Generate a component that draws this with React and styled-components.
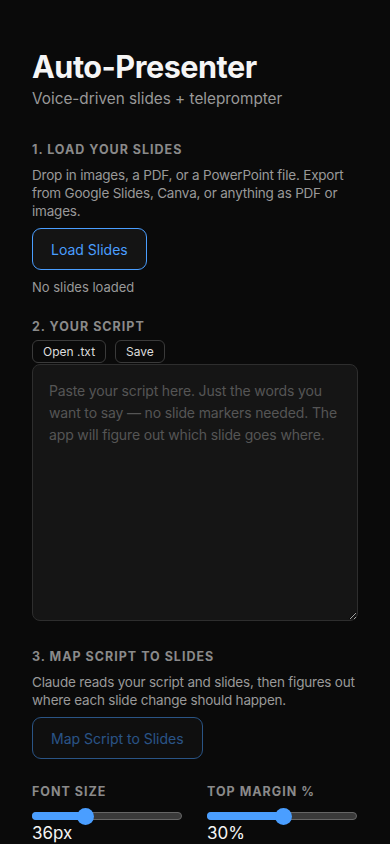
import React, { useState } from "react";
import styled, { createGlobalStyle } from "styled-components";

const GlobalStyle = createGlobalStyle`
  * { box-sizing: border-box; }
  body {
    margin: 0;
    background: #0a0a0a;
    color: #eee;
    font-family: Inter, "Helvetica Neue", Arial, sans-serif;
  }
`;

const Page = styled.main`
  padding: 49px 32px 40px;
  max-width: 390px;
`;

const Title = styled.h1`
  margin: 0;
  font-size: 30.6px;
  font-weight: 700;
  letter-spacing: -0.5px;
  color: #f5f5f5;
  line-height: 36px;
`;

const Subtitle = styled.p`
  margin: 3px 0 0;
  font-size: 15.3px;
  color: #999;
  line-height: 22px;
`;

const Section = styled.section`
  margin-top: ${(p) => p.$top || 28}px;
`;

const Heading = styled.h2`
  margin: 0 0 8px;
  font-size: 12.5px;
  font-weight: 700;
  letter-spacing: 1px;
  text-transform: uppercase;
  color: #8a8a8a;
  line-height: 16px;
`;

const Hint = styled.p`
  margin: 0;
  font-size: 13.5px;
  letter-spacing: -0.2px;
  line-height: 18px;
  color: #999;
`;

const BigButton = styled.button`
  margin-top: 8px;
  height: 42px;
  padding: 0 18px;
  border-radius: 9px;
  border: 1px solid #4a9eff;
  background: #141414;
  color: #4a9eff;
  font-family: inherit;
  font-size: 14px;
  opacity: ${(p) => (p.disabled ? 0.5 : 1)};
`;

const Status = styled.p`
  margin: 9px 0 0;
  font-size: 13px;
  color: #999;
`;

const ToolRow = styled.div`
  display: flex;
  gap: 9px;
  margin-top: -3px;
`;

const SmallButton = styled.button`
  height: 23px;
  padding: 0 10px;
  border-radius: 6px;
  border: 1px solid #3a3a3a;
  background: #0a0a0a;
  color: #ddd;
  font-family: inherit;
  font-size: 12px;
`;

const ScriptBox = styled.textarea`
  display: block;
  width: 100%;
  height: 257px;
  margin-top: 1px;
  padding: 15px 16px;
  border-radius: 8px;
  border: 1px solid #2e2e2e;
  background: #151515;
  color: #ddd;
  font-family: inherit;
  font-size: 14px;
  letter-spacing: -0.15px;
  line-height: 22px;
  resize: vertical;
  &::placeholder { color: #555; }
`;

const Controls = styled.div`
  display: grid;
  grid-template-columns: 150px 150px;
  column-gap: 25px;
  margin-top: 25px;
`;

const Control = styled.div`
  display: flex;
  flex-direction: column;
`;

const ControlLabel = styled(Heading)`
  margin: 0 0 8px;
`;

const Track = styled.div`
  position: relative;
  height: 8px;
  border-radius: 4px;
  background: #3a3a3a;
  border: 1px solid #666;
  margin: 4px 0;
`;

const Fill = styled.div`
  position: absolute;
  left: -1px;
  top: -1px;
  bottom: -1px;
  border-radius: 4px;
  background: #4a9eff;
`;

const Thumb = styled.div`
  position: absolute;
  top: 50%;
  width: 17px;
  height: 17px;
  margin: -8.5px 0 0 -8.5px;
  border-radius: 50%;
  background: #4a9eff;
`;

const Value = styled.span`
  margin-top: -1px;
  font-size: 17px;
  color: #f5f5f5;
  line-height: 20px;
`;

function Slider({ label, value, min, max, unit }) {
  const ratio = (value - min) / (max - min);
  const pos = 8 + ratio * 134;
  return (
    <Control>
      <ControlLabel>{label}</ControlLabel>
      <Track>
        <Fill style={{ width: pos + 1 }} />
        <Thumb style={{ left: pos }} />
      </Track>
      <Value>
        {value}
        {unit}
      </Value>
    </Control>
  );
}

export default function App() {
  const [script, setScript] = useState("");
  return (
    <>
      <GlobalStyle />
      <Page>
        <Title>Auto-Presenter</Title>
        <Subtitle>Voice-driven slides + teleprompter</Subtitle>

        <Section $top={32}>
          <Heading>1. Load your slides</Heading>
          <Hint>
            Drop in images, a PDF, or a PowerPoint file. Export from Google
            Slides, Canva, or anything as PDF or images.
          </Hint>
          <BigButton>Load Slides</BigButton>
          <Status>No slides loaded</Status>
        </Section>

        <Section $top={24}>
          <Heading>2. Your script</Heading>
          <ToolRow>
            <SmallButton>Open .txt</SmallButton>
            <SmallButton>Save</SmallButton>
          </ToolRow>
          <ScriptBox
            value={script}
            onChange={(e) => setScript(e.target.value)}
            placeholder="Paste your script here. Just the words you want to say — no slide markers needed. The app will figure out which slide goes where."
          />
        </Section>

        <Section $top={28}>
          <Heading>3. Map script to slides</Heading>
          <Hint>
            Claude reads your script and slides, then figures out where each
            slide change should happen.
          </Hint>
          <BigButton disabled>Map Script to Slides</BigButton>
        </Section>

        <Controls>
          <Slider label="Font size" value={36} min={24} max={60} unit="px" />
          <Slider label="Top margin %" value={30} min={0} max={60} unit="%" />
        </Controls>
      </Page>
    </>
  );
}
